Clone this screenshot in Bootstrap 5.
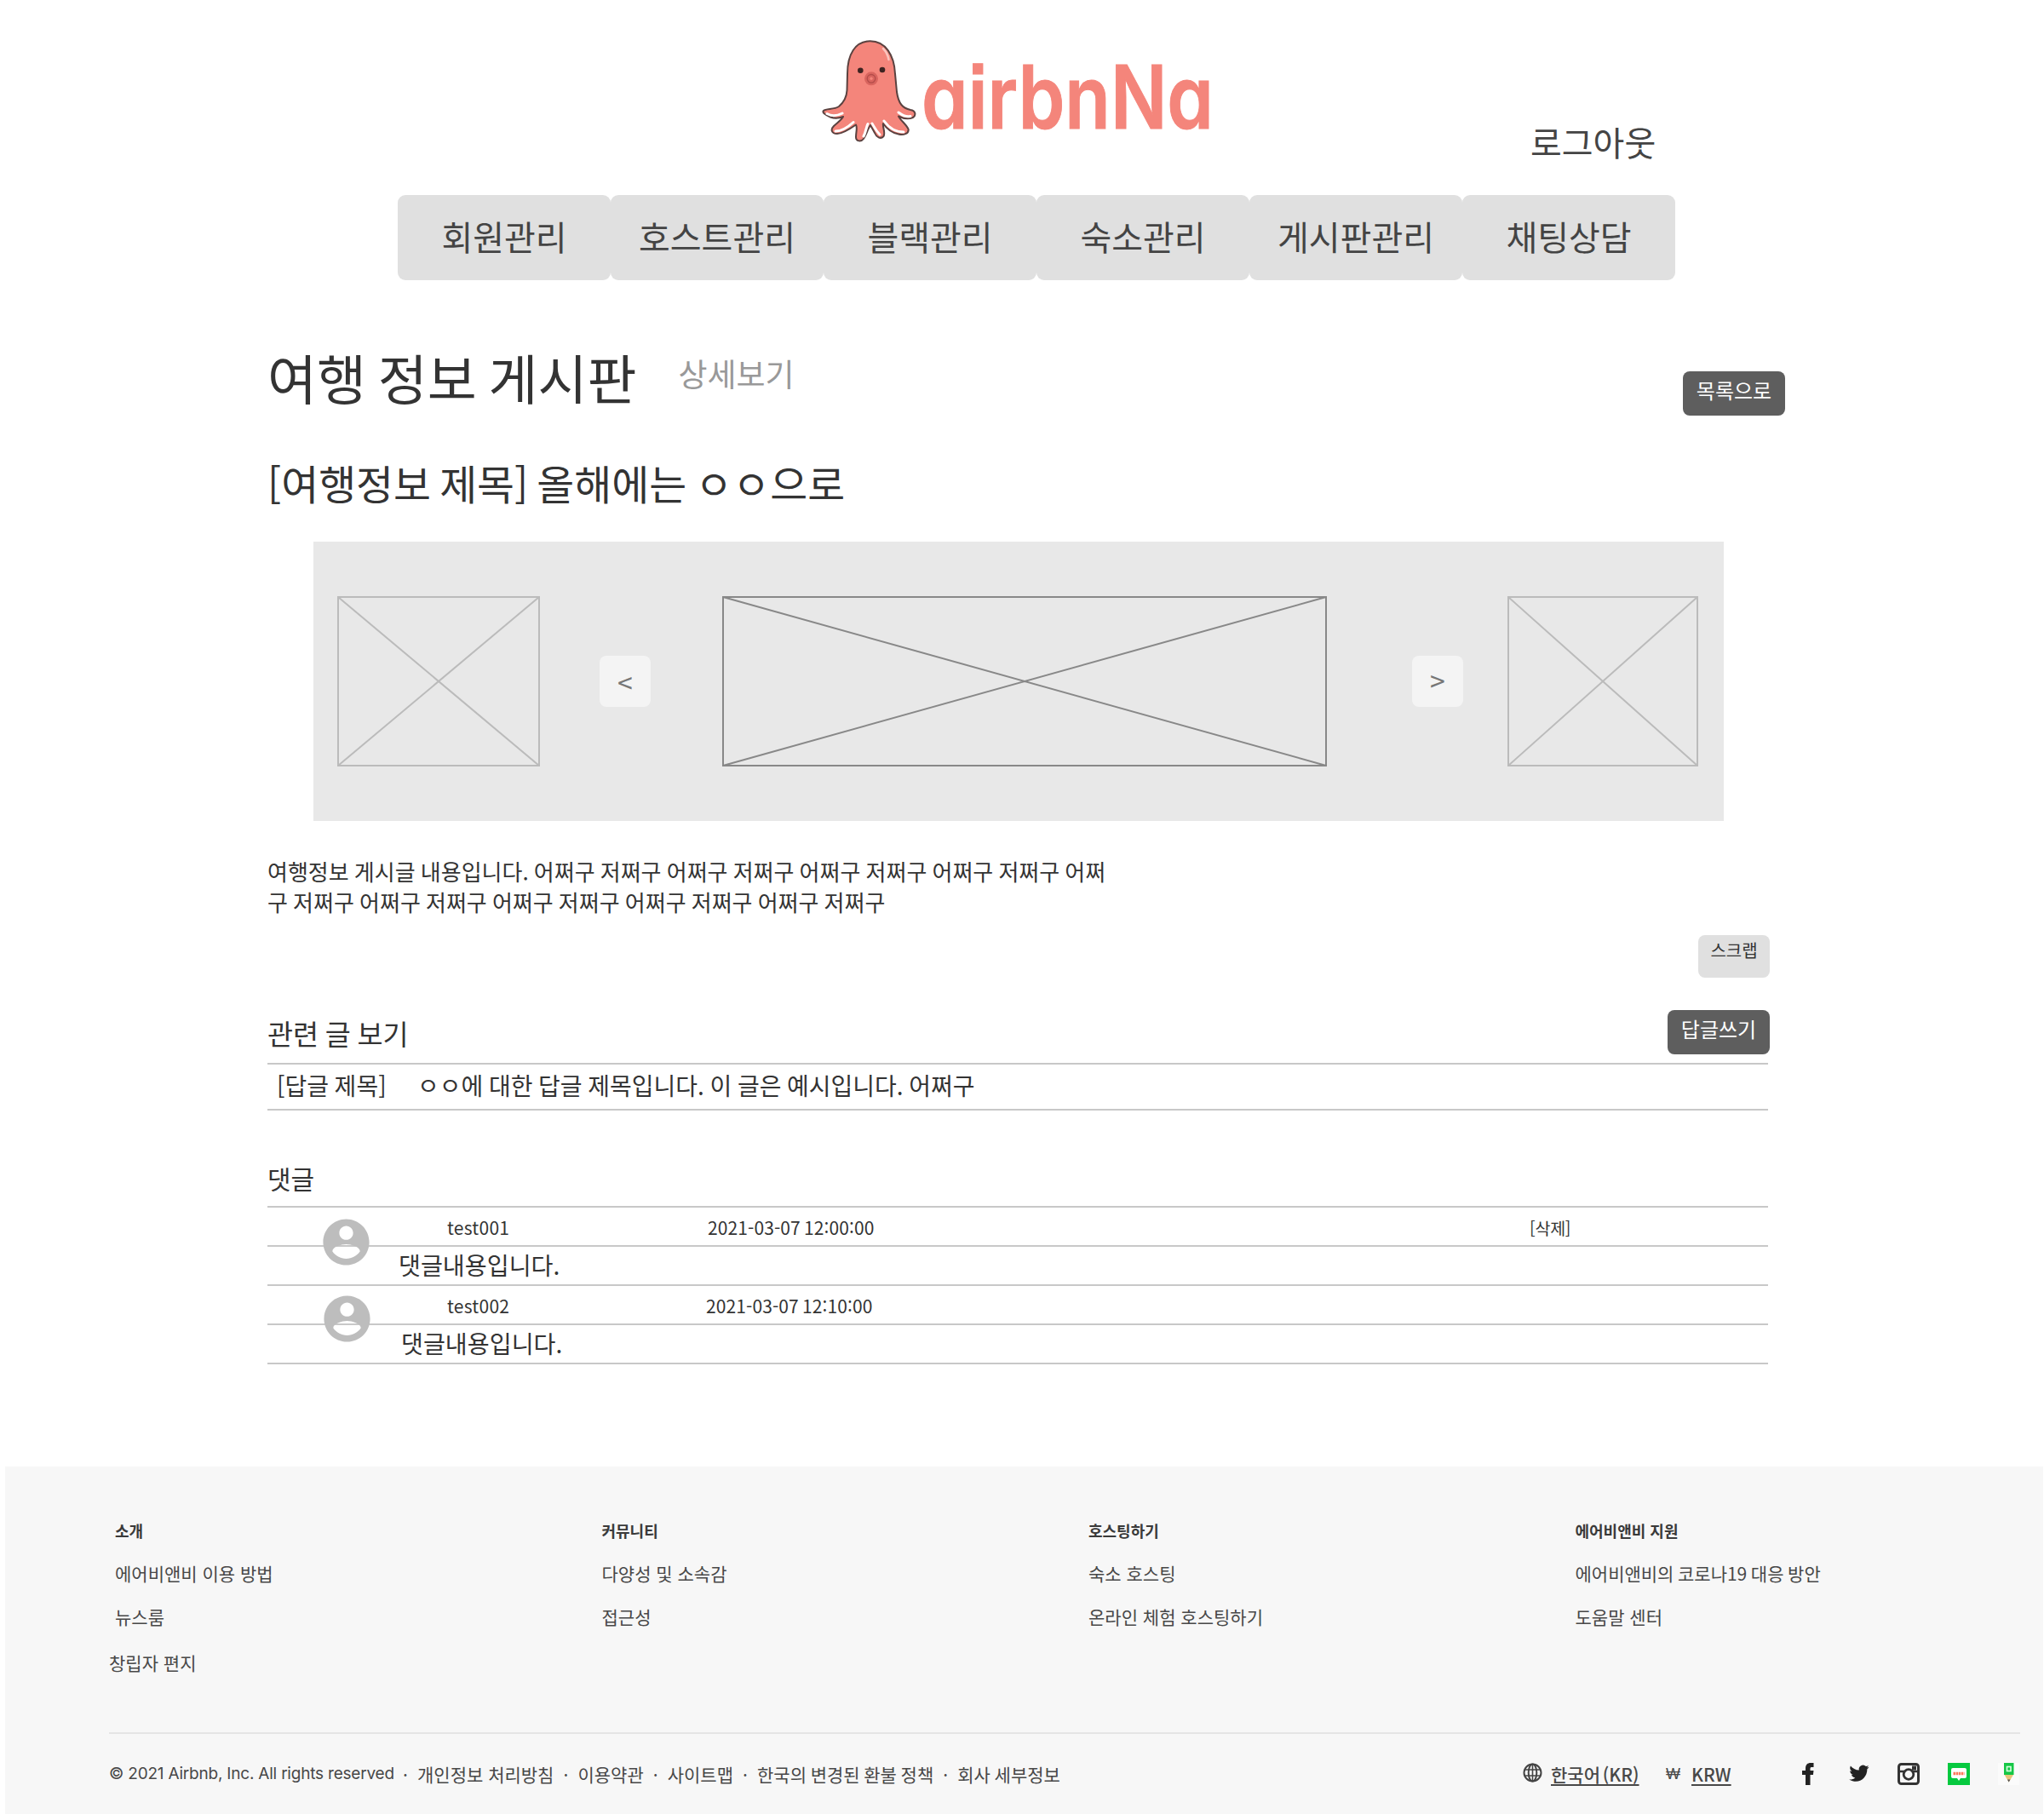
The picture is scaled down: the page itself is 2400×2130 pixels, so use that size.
<!DOCTYPE html>
<html lang="ko">
<head>
<meta charset="utf-8">
<title>airbnNa</title>
<link href="https://cdn.jsdelivr.net/npm/bootstrap@5.3.0/dist/css/bootstrap.min.css" rel="stylesheet">
<style>
body{font-family:"Noto Sans CJK KR",sans-serif;color:#333;background:#fff;width:2400px;overflow-x:hidden;white-space:nowrap}
a{color:inherit;text-decoration:none}
.head-top{height:229px;padding:40px 0 0 960px}
.brand-logo{overflow:visible;flex:none}
.logout{margin:101px 0 0 367px;font-size:40px;line-height:50px;color:#444}
.menu-bar{margin-left:467px;width:1500px}
.menu-bar .nav-link{width:250px;height:100px;background:#e0e0e0;border-radius:9px;color:#444;font-size:40px;line-height:96px;padding:0;text-align:center}
.board{margin-left:314px;width:1762px;padding-top:66px}
.title-row{height:93px}
.board-title{font-size:63px;line-height:90px;margin:2px 0 0;font-weight:400;word-spacing:-3.8px}
.board-sub{font-size:37px;line-height:50px;color:#999;margin:18px 0 0 49px}
.btn-dim{background:#5e5e5e;color:#fff;width:120px;height:52px;border:0;border-radius:8px;font-size:24px;line-height:36px;padding:0 0 9px}
.btn-list{margin:41px -20px 0 0}
.btn-dim:hover{background:#4e4e4e;color:#fff}
.btn-scrap{background:#e0e0e0;color:#333;width:84px;height:50px;border:0;border-radius:8px;font-size:20px;line-height:30px;padding:0 0 15px;display:block;margin:21px -2px 0 auto}
.post-title{font-size:47.8px;line-height:72px;margin:43px 0 0;font-weight:400;word-spacing:-3.3px}
.slides{margin:33px 0 0 54px;width:1656px;height:328px;background:#e8e8e8;padding-left:28px}
.slides svg{display:block;flex:none;fill:none;stroke:#bbb;stroke-width:2}
.slides svg.main-slide{stroke:#888}
.btn-slide{width:60px;height:60px;background:#f4f4f4;color:#777;border-radius:8px;border:0;font-size:32px;line-height:58px;padding:0;flex:none}
.btn-slide.prev{margin:0 84px 0 70px}
.btn-slide.next{margin:0 52px 0 100px;line-height:55px;padding-bottom:3px}
.post-body{font-size:26px;line-height:36px;margin:41px 0 0;word-spacing:-1.1px}
.rel-row{height:52px;margin-top:38px}
.rel-title{font-size:32.7px;line-height:54px;margin:0;font-weight:400;word-spacing:-1.5px}
.reply-item{margin-top:10px;height:56px;border-top:2px solid #c8c8c8;border-bottom:2px solid #c8c8c8;font-size:28px;line-height:49px;padding-left:11px;word-spacing:-1.2px}
.reply-item .tag-col{width:165px}
.cmt-title{font-size:30px;line-height:46px;margin:56px 0 10px;font-weight:400}
.cmt-list{border-bottom:2px solid #c8c8c8}
.cmt{position:relative}
.cmt-meta,.cmt-text{height:46px;border-top:2px solid #c8c8c8}
.cmt-meta{font-size:21px;line-height:47px;letter-spacing:.1px}
.cmt-meta .who{padding-left:211px;width:517px;letter-spacing:.25px}
.cmt-meta .when{width:965px;word-spacing:-1.800px}
.cmt-meta .del{font-size:19.500px;letter-spacing:-.2px}
.cmt-text{font-size:28.200px;line-height:42px;padding-left:154px}
.cmt .avatar{position:absolute;left:59.5px;top:9.5px;width:65px;height:65px;fill:#bdbdbd}
.cmt.second .who{width:515px}
.cmt.second .cmt-text{padding-left:157px}
.cmt.second .avatar{left:61px;top:7.5px}
.foot{margin:120px 1px 0 6px;height:409px;background:#f7f7f7;color:#484848;padding:60px 0 0 122px}
.foot-cols{height:252px;padding-left:7px}
.foot-col{width:571.5px;flex:none}
.foot-col h6{font-size:18px;line-height:30px;font-weight:700;margin:0;color:#3a3a3a}
.foot-col a{display:block;font-size:21px;line-height:32px;margin-top:19px}
.foot-col a.founder{margin:22px 0 0 -7px}
.foot-col a.tight{word-spacing:-1.300px}
.foot-line{width:2244px;height:2px;background:#e5e5e5}
.foot-bottom{margin-top:31px;font-size:21px;line-height:32px;height:32px}
.foot-bottom>*{flex:none}
.latin{font-family:Inter,sans-serif;font-size:19px;letter-spacing:-.21px;width:334px}
.dot-sep{width:28px;text-align:center}
.refund{word-spacing:-1.200px}
.locale{width:611px}
.pick{text-decoration:underline;text-underline-offset:3px;font-weight:500;word-spacing:-3px}
.pick.lang{width:135px}
.pick.cur{width:130px}
.won{width:30px;font-family:"Liberation Sans",sans-serif;font-size:18px}
</style>
<script src="https://cdn.jsdelivr.net/npm/bootstrap@5.3.0/dist/js/bootstrap.bundle.min.js"></script>
</head>
<body>
<header>
  <div class="head-top d-flex align-items-start">
    <svg class="brand-logo" width="470" height="160" viewBox="0 0 470 160">
      <path d="M35 46.700C35 24 44 8.300 61.700 8.300C80 8.300 90 25 91 46.700L93 68C95 82 100 87 109 89C115 90 116 95 112 98C107 100 100 99 95 96.500C98 102 105 107 106.700 112C107 117 101 119 95 117.500C87 116 81 111 77 105C76 109 80 116 77.500 120C74 124 69 121 67 116C65 112 63 109 62 107C59 111 57 119 54 123C51 127 45 126 45 121C45 115 47 110 45 106.500C40 110 30 117 23 117C16 117 15 112 19 108C23 104 28 101 30 97C25 99 19 99 15 97.500C9 95 5 92 7 90C10 87 19 89 25 85C31 80 34 75 34.500 66Z" fill="#f4857b" stroke="#5a4240" stroke-width="2" stroke-linejoin="round"/>
      <path d="M11 93.500C17 97 23 96 29 93M21 114C29 114 36 109 42 103.500M54 120C57 114 57 109 59 105.500M73 118C68 113 66 108 64 105M101 115C91 115 83 109 78 102M109 96.500C104 98 99 95 95 92" fill="none" stroke="#fff" stroke-width="3" stroke-linecap="round"/>
      <path d="M77 17Q82 22 83.500 30" fill="none" stroke="#fbc4be" stroke-width="2.500" stroke-linecap="round"/>
      <circle cx="50.300" cy="42.700" r="3.300" fill="#3d2321"/><circle cx="76" cy="42" r="3.300" fill="#3d2321"/>
      <circle cx="63" cy="52.300" r="8" fill="#d9655f"/><circle cx="63" cy="52.300" r="4.800" fill="none" stroke="#b34c49" stroke-width="1.300"/><circle cx="63" cy="52.300" r="1.700" fill="#f4857b"/>
      <text x="122" y="110.500" font-family="Inter, sans-serif" font-weight="600" font-size="103" textLength="343" lengthAdjust="spacingAndGlyphs" fill="#f4857b" stroke="#f4857b" stroke-width="1" style="font-feature-settings:'cv11','ss07'">airbnNa</text>
    </svg>
    <a class="logout" href="#">로그아웃</a>
  </div>
  <nav class="nav menu-bar flex-nowrap">
    <a class="nav-link" href="#">회원관리</a>
    <a class="nav-link" href="#">호스트관리</a>
    <a class="nav-link" href="#">블랙관리</a>
    <a class="nav-link" href="#">숙소관리</a>
    <a class="nav-link" href="#">게시판관리</a>
    <a class="nav-link" href="#">채팅상담</a>
  </nav>
</header>
<main class="board">
  <div class="title-row d-flex align-items-start">
    <h1 class="board-title">여행 정보 게시판</h1>
    <span class="board-sub">상세보기</span>
    <button class="btn btn-dim btn-list ms-auto">목록으로</button>
  </div>
  <h2 class="post-title">[여행정보 제목] 올해에는 ㅇㅇ으로</h2>
  <div class="slides d-flex align-items-center">
    <svg width="238" height="200"><path d="M1 1H237V199H1ZL237 199M237 1L1 199"/></svg>
    <button class="btn btn-slide prev">&lt;</button>
    <svg class="main-slide" width="710" height="200"><path d="M1 1H709V199H1ZL709 199M709 1L1 199"/></svg>
    <button class="btn btn-slide next">&gt;</button>
    <svg width="224" height="200"><path d="M1 1H223V199H1ZL223 199M223 1L1 199"/></svg>
  </div>
  <p class="post-body">여행정보 게시글 내용입니다. 어쩌구 저쩌구 어쩌구 저쩌구 어쩌구 저쩌구 어쩌구 저쩌구 어쩌<br>구 저쩌구 어쩌구 저쩌구 어쩌구 저쩌구 어쩌구 저쩌구 어쩌구 저쩌구</p>
  <button class="btn btn-scrap">스크랩</button>
  <div class="rel-row d-flex justify-content-between">
    <h3 class="rel-title">관련 글 보기</h3>
    <button class="btn btn-dim" style="margin-right:-2px">답글쓰기</button>
  </div>
  <div class="reply-item d-flex"><span class="tag-col">[답글 제목]</span><span>ㅇㅇ에 대한 답글 제목입니다. 이 글은 예시입니다. 어쩌구</span></div>
  <h3 class="cmt-title">댓글</h3>
  <div class="cmt-list">
    <div class="cmt">
      <div class="cmt-meta d-flex"><span class="who">test001</span><span class="when">2021-03-07 12:00:00</span><a class="del" href="#">[삭제]</a></div>
      <div class="cmt-text">댓글내용입니다.</div>
      <svg class="avatar" viewBox="0 0 24 24"><path d="M12 2C6.480 2 2 6.480 2 12s4.480 10 10 10 10-4.480 10-10S17.520 2 12 2zm0 3c1.660 0 3 1.340 3 3s-1.340 3-3 3-3-1.340-3-3 1.340-3 3-3zm0 14.200c-2.500 0-4.710-1.280-6-3.220.030-1.990 4-3.080 6-3.080 1.990 0 5.970 1.090 6 3.080-1.290 1.940-3.500 3.220-6 3.220z"/></svg>
    </div>
    <div class="cmt second">
      <div class="cmt-meta d-flex"><span class="who">test002</span><span class="when">2021-03-07 12:10:00</span></div>
      <div class="cmt-text">댓글내용입니다.</div>
      <svg class="avatar" viewBox="0 0 24 24"><path d="M12 2C6.480 2 2 6.480 2 12s4.480 10 10 10 10-4.480 10-10S17.520 2 12 2zm0 3c1.660 0 3 1.340 3 3s-1.340 3-3 3-3-1.340-3-3 1.340-3 3-3zm0 14.200c-2.500 0-4.710-1.280-6-3.220.030-1.990 4-3.080 6-3.080 1.990 0 5.970 1.090 6 3.080-1.290 1.940-3.500 3.220-6 3.220z"/></svg>
    </div>
  </div>
</main>
<footer class="foot">
  <div class="foot-cols d-flex">
    <div class="foot-col"><h6>소개</h6><a href="#">에어비앤비 이용 방법</a><a href="#">뉴스룸</a><a class="founder" href="#">창립자 편지</a></div>
    <div class="foot-col"><h6>커뮤니티</h6><a href="#">다양성 및 소속감</a><a href="#">접근성</a></div>
    <div class="foot-col"><h6>호스팅하기</h6><a href="#">숙소 호스팅</a><a href="#">온라인 체험 호스팅하기</a></div>
    <div class="foot-col w-auto"><h6>에어비앤비 지원</h6><a class="tight" href="#">에어비앤비의 코로나19 대응 방안</a><a href="#">도움말 센터</a></div>
  </div>
  <div class="foot-line"></div>
  <div class="foot-bottom d-flex">
    <span class="latin">© 2021 Airbnb, Inc. All rights reserved</span><span class="dot-sep">·</span>
    <a href="#">개인정보 처리방침</a><span class="dot-sep">·</span>
    <a href="#">이용약관</a><span class="dot-sep">·</span>
    <a href="#">사이트맵</a><span class="dot-sep">·</span>
    <a class="refund" href="#">한국의 변경된 환불 정책</a><span class="dot-sep">·</span>
    <a class="refund" href="#">회사 세부정보</a>
    <div class="locale d-flex ms-auto">
      <svg width="23" height="23" viewBox="0 0 23 23" style="margin:3px 10px 0 0" fill="none" stroke="#444" stroke-width="2"><circle cx="11.500" cy="11.500" r="10"/><ellipse cx="11.500" cy="11.500" rx="4.800" ry="10"/><path d="M2.500 8H20.500M2.500 15H20.500M11.500 1.500V21.500" stroke-width="1.600"/></svg>
      <a class="pick lang" href="#">한국어 (KR)</a>
      <span class="won">₩</span>
      <a class="pick cur" href="#">KRW</a>
      <svg width="256" height="28" viewBox="0 0 256 28" style="margin-top:2px">
        <path d="M4 27V15H0V10H4V7.500C4 3 6.500 1 10 1h3.500v5h-2c-1.600 0-2 .6-2 2v2H13.500L12.900 15H9.500V27z" fill="#222"/>
        <path d="M78.500 5.800c-.8.400-1.800.7-2.700.8 1-.6 1.700-1.600 2.100-2.700-1 .6-2 1-3 1.200A4.800 4.800 0 0 0 66.800 9.500C62.800 9.300 59.300 7.400 56.900 4.400c-1.300 2.200-.7 5 1.500 6.400-.8 0-1.500-.2-2.200-.6 0 2.300 1.600 4.300 3.800 4.800-.7.200-1.400.2-2.100.1.600 1.900 2.400 3.300 4.400 3.300-2 1.600-4.500 2.300-7.100 2 10 6.200 21.200-.4 21.200-12.100.8-.6 1.600-1.500 2.100-2.500z" fill="#222"/>
        <rect x="113.500" y="2.500" width="23" height="23" rx="3" fill="none" stroke="#333" stroke-width="3"/><path d="M113 11h7M130 11h7" stroke="#333" stroke-width="2.500"/><circle cx="125" cy="14.500" r="5.800" fill="none" stroke="#333" stroke-width="2.800"/><rect x="129" y="4.500" width="5" height="5" fill="#333"/>
        <path d="M171 1h26v26h-26z" fill="#06c93f"/><path d="M177 7h14q2 0 2 2v8q0 2-2 2h-5l-2 3-2-3h-5q-2 0-2-2V9q0-2 2-2z" fill="#fff"/><path d="M177.500 13.500h13" stroke="#ff7a5c" stroke-width="3.500" stroke-dasharray="2.500 .6"/>
        <path d="M230 1h25v26h-25z" fill="#fbfbfb"/><path d="M237 1h11.500v14H237z" fill="#16c746"/><rect x="240.500" y="5.500" width="4.500" height="5" fill="none" stroke="#d8ffe0" stroke-width="1.600"/><path d="M237.500 15h10.500l-5.300 8.500z" fill="#e8c47a"/><path d="M241 20.500h3.500l-1.800 3z" fill="#555"/>
      </svg>
    </div>
  </div>
</footer>
</body>
</html>
